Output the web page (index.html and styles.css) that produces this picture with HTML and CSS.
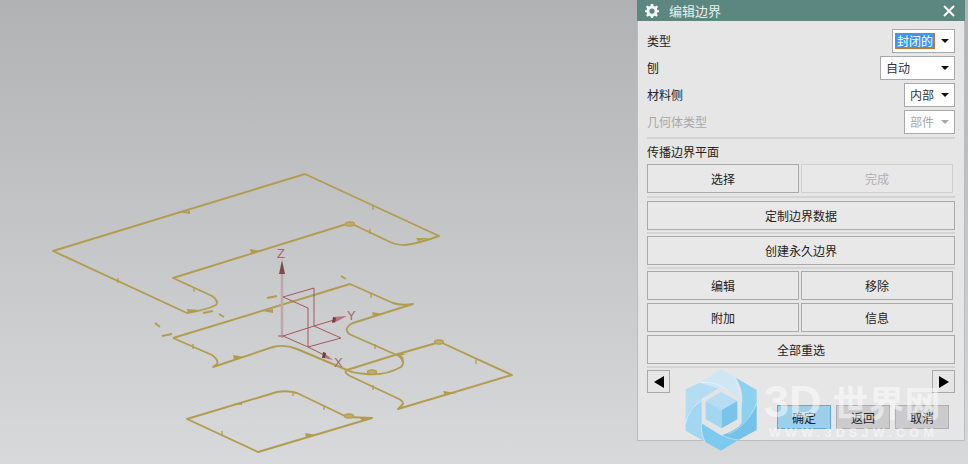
FILE: index.html
```html
<!DOCTYPE html>
<html lang="zh-CN">

<head>
    <meta charset="UTF-8">
    <title>编辑边界</title>
    <link rel="stylesheet" href="styles.css">
</head>

<body>
    <div class="app">
        <svg class="view" viewBox="0 0 637 464" width="637" height="464">
            <g class="edge">
                <path d="M53 251 L305 174 L439 236 Q420 243 405 245 Q395 245 388 241 L350 223 L173 278 L212 296 Q219 301 216 305 Q206 310 187 313 Z" />
                <path d="M173 338 L350 284 L393 303 Q402 306 413 304 L353 323 Q343 328 349 334 L399 356 Q406 362 401 367 Q385 376 366 374 Q352 373 347 370" />
                <path d="M173 338 L212 355 Q219 360 217 364 L213 367 L273 347 Q285 344 297 349 L347 370 L398 354 L440 342 L512 375 L398 409 L403 404 Q403 401 399 399 L350 376 Q343 372 347 370" />
                <path d="M398 354 Q405 358 402 362" />
                <path d="M187 419 L277 392 Q287 390 297 393 L347 417 L372 418 L258 452 Z" />
                <path d="M155 323 L160 327 M162 336 L172 334 M203 313 L213 311 M219 314 L224 317 M267 298 L277 296 M341 276 L346 279" />
                <path class="tick" d="M118 278 V283 M194 287 V292 M373 205 V210 M370 229 V234 M193 344 V349 M371 293 V298 M375 344 V349 M373 385 V390 M476 359 V364 M293 391 V396 M324 405 V410 M222 431 V436" />
            </g>
            <g class="mark">
                <polygon points="177,212 190,211 190,214" />
                <polygon points="250,249 262,251 251,254" />
                <polygon points="187,309 200,310 188,313" />
                <polygon points="416,238 429,238 418,241" />
                <polygon points="233,355 245,357 234,360" />
                <polygon points="262,311 273,309 273,313" />
                <polygon points="372,312 383,314 373,316" />
                <polygon points="443,391 457,393 445,395" />
                <polygon points="233,404 242,402 242,405" />
                <polygon points="305,433 317,435 306,437" />
                <polygon points="360,418 372,418 362,421" />
                <polygon points="397,353 407,354 398,356" />
                <ellipse class="loop" cx="350" cy="224" rx="4.5" ry="2.2" />
                <ellipse class="loop" cx="439" cy="342" rx="4.5" ry="2.2" />
                <ellipse class="loop" cx="372" cy="372" rx="4.5" ry="2.2" />
                <ellipse class="loop" cx="349" cy="416" rx="4.5" ry="2.2" />
            </g>
            <line class="z-axis" x1="282" y1="274" x2="282" y2="338" />
            <path class="plane" d="M283 297 L314 288 V326 M283 297 L308 308 V347 M278 336 H283 L314 326 L341 338 L308 347 L283 336 M314 326 L334 320 M308 347 L324 355" />
            <polygon class="cone" points="282,260 285,274 279,274" />
            <polygon class="cone-y" points="333,317 347,316 334,323" />
            <polygon class="cone-base" points="333,317 336,318 335,322 332,323" />
            <polygon class="cone-x" points="323,352 333,360 324,358" />
            <polygon class="cone-base" points="323,352 326,353 325,358 322,358" />
            <text class="axis-label" x="277" y="258">Z</text>
            <text class="axis-label" x="347" y="320">Y</text>
            <text class="axis-label" x="334" y="367">X</text>
        </svg>

        <div class="panel">
            <div class="title-bar">
                <svg class="gear" viewBox="0 0 16 16" width="14" height="14">
                    <path d="M6.6 0 H9.4 L9.8 2.2 L11.4 2.9 L13.3 1.6 L15 3.4 L13.6 5.2 L14.2 6.8 L16 7.1 V9.2 L14.2 9.6 L13.5 11.2 L14.7 13.1 L13.1 14.7 L11.2 13.5 L9.6 14.2 L9.2 16 H6.8 L6.4 14.2 L4.8 13.5 L2.9 14.7 L1.3 13.1 L2.5 11.2 L1.8 9.6 L0 9.2 V7.1 L1.8 6.8 L2.4 5.2 L1 3.4 L2.7 1.6 L4.6 2.9 L6.2 2.2 Z M8 5 A3 3 0 1 0 8 11 A3 3 0 1 0 8 5 Z" />
                </svg>
                <span class="title">编辑边界</span>
                <svg class="close" viewBox="0 0 12 12" width="12" height="12">
                    <path d="M1 1 L11 11 M11 1 L1 11" />
                </svg>
            </div>
            <div class="body">
                <div class="row">
                    <span>类型</span>
                    <div class="select w-type"><span class="picked">封闭的</span><i class="caret"></i></div>
                </div>
                <div class="row">
                    <span>刨</span>
                    <div class="select w-plane"><span>自动</span><i class="caret"></i></div>
                </div>
                <div class="row">
                    <span>材料侧</span>
                    <div class="select w-side"><span>内部</span><i class="caret"></i></div>
                </div>
                <div class="row off">
                    <span>几何体类型</span>
                    <div class="select w-side"><span>部件</span><i class="caret"></i></div>
                </div>
                <div class="sep first"></div>
                <div class="caption">传播边界平面</div>
                <div class="btn-row">
                    <button class="btn half">选择</button>
                    <button class="btn half off">完成</button>
                </div>
                <div class="sep wide"></div>
                <button class="btn">定制边界数据</button>
                <div class="sep"></div>
                <button class="btn">创建永久边界</button>
                <div class="sep"></div>
                <div class="btn-row">
                    <button class="btn half">编辑</button>
                    <button class="btn half">移除</button>
                </div>
                <div class="btn-row next">
                    <button class="btn half">附加</button>
                    <button class="btn half">信息</button>
                </div>
                <button class="btn next-full">全部重选</button>
                <div class="sep"></div>
                <div class="arrows">
                    <div class="arrow"><i class="tri-left"></i></div>
                    <div class="arrow"><i class="tri-right"></i></div>
                </div>
                <div class="actions">
                    <button class="act primary">确定</button>
                    <button class="act">返回</button>
                    <button class="act">取消</button>
                </div>
            </div>
        </div>

        <!-- watermark lies over the panel -->
        <svg class="logo" viewBox="0 0 390 312" width="130" height="104">
            <polygon fill="#cfe7f5" points="183,28 225,52 243,125 183,95 125,118 120,68" />
            <polygon fill="#b4dcf3" points="77,88 120,68 205,95 125,122 77,190" />
            <polygon fill="#a2d6f1" points="77,190 90,150 125,122 130,190 135,245 77,212" />
            <path fill="#7ccaee" d="M125 190 L183 225 L235 240 L183 272 L135 245 C127 225 124 205 125 190 Z" />
            <path fill="#74c2e9" d="M185 225 C230 215 270 175 290 130 V210 L235 240 C215 238 200 232 185 225 Z" />
            <path fill="#8dd1f1" d="M225 52 L290 90 V130 C275 165 255 185 240 195 L245 130 C247 100 240 75 225 52 Z" />
            <path class="blade-line" d="M120 68 C160 63 195 78 215 105 M225 52 C243 80 248 105 245 130 M290 130 C275 170 245 205 205 222 M235 240 C215 238 200 232 185 225 M135 245 C125 225 123 205 125 190 M77 190 C85 155 105 135 125 122" />
            <polygon fill="#e3e4e5" points="183,80 245,116 245,190 183,226 125,190 125,116" />
            <polygon fill="#b6ddf4" points="183,95 232,123 185,150 137,123" />
            <polygon fill="#a2d6f1" points="137,123 185,150 185,205 137,178" />
            <polygon fill="#78c4ea" points="232,123 232,178 185,205 185,150" />
        </svg>
        <div class="wm-text"><span class="wm-latin">3D</span>世界网</div>
        <div class="wm-url">WWW.3DSJW.COM</div>
    </div>
</body>

</html>
```

FILE: styles.css
```css
* {
    box-sizing: border-box;
}

body {
    margin: 0;
    font-family: "Noto Sans CJK SC", "Liberation Sans", sans-serif;
    font-size: 12px;
    color: #222;
}

.app {
    position: relative;
    display: flex;
    align-items: flex-start;
    width: 968px;
    height: 464px;
    overflow: hidden;
    background: linear-gradient(#b1b2b4, #d8d9db);
}

.view {
    display: block;
    flex: none;
}

.edge path {
    fill: none;
    stroke: #b29c50;
    stroke-width: 1.9;
    stroke-linejoin: round;
}

.edge .tick {
    stroke-width: 1.3;
}

.mark {
    fill: #b29c50;
}

.mark .loop {
    fill: #c0ad68;
    stroke: #b29c50;
    stroke-width: 1.2;
}

.z-axis {
    stroke: #bda7ab;
    stroke-width: 2.5;
}

.plane {
    fill: none;
    stroke: #a5565f;
    stroke-width: 1;
}

.cone {
    fill: #7d4a50;
}

.cone-y,
.cone-x {
    fill: #bb7478;
}

.cone-base {
    fill: #6d3f44;
}

.axis-label {
    font-family: "Liberation Sans", sans-serif;
    font-size: 13px;
    fill: #a0686f;
}

.panel {
    flex: none;
    width: 328px;
    height: 441px;
    background: #e6e6e6;
    border: 1px solid #bdbdbd;
    border-top: 0;
}

.title-bar {
    display: flex;
    align-items: center;
    height: 21px;
    margin: 0 -1px;
    padding: 0 10px 0 8px;
    background: #5b8780;
    color: #e8f0ee;
}

.gear {
    fill: #f2f5f4;
}

.title {
    margin-left: 10px;
    font-size: 13px;
}

.close {
    margin-left: auto;
    fill: none;
    stroke: #fff;
    stroke-width: 2;
}

.body {
    display: flex;
    flex-direction: column;
    padding: 8px 9px 0;
}

.row {
    display: flex;
    justify-content: space-between;
    align-items: center;
    height: 24px;
    margin-bottom: 3px;
}

.row > span {
    margin-top: -2px;
}

.row.off {
    color: #a8a8a8;
    margin-bottom: 0;
}

.select {
    display: flex;
    justify-content: space-between;
    align-items: center;
    height: 24px;
    padding: 0 5px 0 5px;
    background: #fff;
    border: 1px solid #a9a9a9;
    color: #333;
    line-height: 16px;
}

.w-type {
    width: 63px;
    padding-left: 2px;
}

.w-plane {
    width: 75px;
}

.w-side {
    width: 51px;
}

.picked {
    padding: 0 2px;
    background: #3d97ef;
    color: #fff;
    outline: 1px dotted #c9772e;
    outline-offset: -1px;
}

.caret {
    width: 0;
    height: 0;
    border-left: 4px solid transparent;
    border-right: 4px solid transparent;
    border-top: 4px solid #111;
}

.row.off .select {
    color: #a8a8a8;
}

.row.off .caret {
    border-top-color: #a8a8a8;
}

.sep {
    flex: none;
    height: 2px;
    margin: 2px 0;
    background: #d4d4d4;
}

.sep.first {
    margin: 3px 0 4px;
}

.sep.wide {
    margin: 3px 0;
}

.caption {
    height: 21px;
    line-height: 17px;
}

.btn-row {
    display: flex;
    gap: 2px;
}

.btn-row.next {
    margin-top: 3px;
}

.btn {
    display: block;
    width: 308px;
    height: 29px;
    padding: 0;
    background: #e8e8e8;
    border: 1px solid #a9a9a9;
    color: #222;
    font: inherit;
}

.btn.half {
    width: 152px;
}

.btn.off {
    border-color: #cfcfcf;
    color: #b0b0b0;
}

.btn.next-full {
    margin-top: 3px;
}

.arrows {
    display: flex;
    justify-content: space-between;
}

.arrow {
    display: flex;
    justify-content: center;
    align-items: center;
    width: 23px;
    height: 23px;
    background: #e6e6e6;
    border: 1px solid #a9a9a9;
}

.tri-left {
    border-top: 6px solid transparent;
    border-bottom: 6px solid transparent;
    border-right: 10px solid #000;
}

.tri-right {
    border-top: 6px solid transparent;
    border-bottom: 6px solid transparent;
    border-left: 10px solid #000;
}

.actions {
    display: flex;
    justify-content: flex-end;
    gap: 5px;
    margin-top: 12px;
    padding-right: 6px;
}

.act {
    width: 54px;
    height: 24px;
    padding: 0;
    background: #cbcbcd;
    border: 1px solid #aeaeb0;
    color: #222;
    font: inherit;
}

.act.primary {
    background: #9dcfea;
    border-color: #5fa8d8;
}

.logo {
    position: absolute;
    left: 660px;
    top: 360px;
}

.blade-line {
    fill: none;
    stroke: #fff;
    stroke-opacity: 0.6;
    stroke-width: 2;
}

.wm-text {
    position: absolute;
    left: 764px;
    top: 376px;
    color: rgba(255, 255, 255, 0.5);
    font-family: "Noto Sans CJK SC", sans-serif;
    font-size: 36px;
    font-weight: bold;
    line-height: 50px;
    white-space: nowrap;
}

.wm-latin {
    margin-right: 11px;
    font-family: "Liberation Sans", sans-serif;
    font-size: 45px;
}

.wm-url {
    position: absolute;
    left: 769px;
    top: 426px;
    color: rgba(255, 255, 255, 0.5);
    font-family: "Liberation Sans", sans-serif;
    font-size: 12.5px;
    font-weight: bold;
    letter-spacing: 4.3px;
    line-height: 14px;
    white-space: nowrap;
}
```
